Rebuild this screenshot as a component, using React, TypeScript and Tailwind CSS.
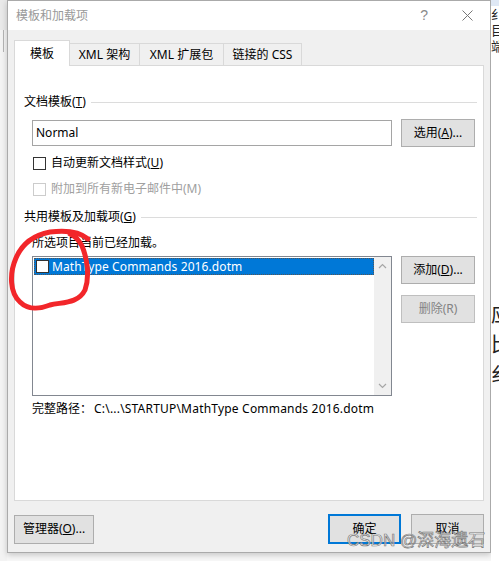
import React from 'react';

const font = "font-['Noto_Sans','Noto_Sans_CJK_SC',sans-serif]";

const Btn: React.FC<{ children: React.ReactNode; disabled?: boolean; primary?: boolean; className?: string }> = ({
  children,
  disabled,
  primary,
  className = '',
}) => (
  <div
    className={`flex items-center justify-center bg-[#e1e1e1] text-[12px] ${
      primary ? 'border-2 border-[#0078d7]' : disabled ? 'border border-[#bfbfbf]' : 'border border-[#adadad]'
    } ${disabled ? 'text-[#838383]' : 'text-[#000]'} ${className}`}
  >
    {children}
  </div>
);

const Chevron: React.FC<{ up?: boolean }> = ({ up }) => (
  <svg width="9" height="6" viewBox="0 0 9 6" className="block">
    <path d={up ? 'M1 5 L4.5 1.5 L8 5' : 'M1 1 L4.5 4.5 L8 1'} fill="none" stroke="#a6a6a6" strokeWidth="1.2" />
  </svg>
);

const SectionLabel: React.FC<{ children: React.ReactNode }> = ({ children }) => (
  <div className="flex items-center h-[18px] pl-[9px] pr-[6px]">
    <span className="text-[12px] text-[#000] whitespace-nowrap">{children}</span>
    <div className="flex-1 h-px bg-[#dcdcdc] ml-[5px]" />
  </div>
);

export default function App() {
  return (
    <div className={`relative w-[499px] h-[561px] overflow-hidden bg-[#f7f7f7] flex ${font}`}>
      {/* left backdrop */}
      <div className="w-[7px] h-full bg-[#f3f3f3] flex flex-col">
        <div className="h-[30px] bg-[#e9e9e9]" />
        <div className="w-px h-[22px] bg-[#b5b5b5] ml-[3px]" />
      </div>

      {/* dialog */}
      <div className="w-[484px] h-[553px] border border-[#aaaaaa] bg-[#f0f0f0] flex flex-col shadow-[0_2px_6px_rgba(0,0,0,0.2)]">
        <div className="h-[30px] bg-white flex items-center pl-[8px] pr-[17px]">
          <span className="text-[12px] text-[#999999]">模板和加载项</span>
          <div className="flex-1" />
          <span className="text-[14px] text-[#8a8a8a] mr-[34px] font-['Liberation_Sans',sans-serif]">?</span>
          <svg width="11" height="11" viewBox="0 0 11 11">
            <path d="M0.5 0.5 L10.5 10.5 M10.5 0.5 L0.5 10.5" stroke="#777" strokeWidth="1" />
          </svg>
        </div>

        <div className="flex-1 flex flex-col px-[6px] pt-[10px] pb-[8px]">
          {/* tabs */}
          <div className="flex items-end h-[26px] relative z-10">
            <div className="w-[56px] h-[26px] bg-white border border-[#d9d9d9] border-b-0 flex items-center justify-center text-[12px] text-[#000]">
              模板
            </div>
            <div className="w-[70px] h-[23px] border border-[#d9d9d9] border-l-0 border-b-0 flex items-center justify-center text-[12px] text-[#000]">
              XML 架构
            </div>
            <div className="w-[84px] h-[23px] border border-[#d9d9d9] border-l-0 border-b-0 flex items-center justify-center text-[12px] text-[#000]">
              XML 扩展包
            </div>
            <div className="w-[78px] h-[23px] border border-[#d9d9d9] border-l-0 border-b-0 flex items-center justify-center text-[12px] text-[#000]">
              链接的 CSS
            </div>
          </div>

          {/* panel */}
          <div className="h-[436px] -mt-px bg-white border border-[#d9d9d9] flex flex-col">
            <div className="mt-[27px]">
              <SectionLabel>
                文档模板(<u>T</u>)
              </SectionLabel>
            </div>

            <div className="mt-[8px] flex items-center h-[28px] pl-[17px]">
              <div className="w-[360px] h-[26px] border border-[#a5a5a5] flex items-center pl-[3px] text-[12px] text-[#000]">
                Normal
              </div>
              <Btn className="ml-[9px] w-[74px] h-[28px]">
                选用(<u>A</u>)...
              </Btn>
            </div>

            <div className="mt-[7px] flex items-center h-[18px] pl-[18px]">
              <div className="w-[13px] h-[13px] border border-[#333333] bg-white" />
              <span className="ml-[5px] text-[12px] text-[#000]">
                自动更新文档样式(<u>U</u>)
              </span>
            </div>

            <div className="mt-[8px] flex items-center h-[18px] pl-[18px]">
              <div className="w-[13px] h-[13px] border border-[#cccccc] bg-white" />
              <span className="ml-[5px] text-[12px] text-[#a0a0a0]">附加到所有新电子邮件中(M)</span>
            </div>

            <div className="mt-[10px]">
              <SectionLabel>
                共用模板及加载项(<u>G</u>)
              </SectionLabel>
            </div>

            <div className="mt-[8px] h-[18px] pl-[17px] flex items-center text-[12px] text-[#000]">
              所选项目当前已经加载。
            </div>

            <div className="mt-[4px] flex items-start pl-[17px]">
              <div className="w-[360px] h-[140px] border border-[#828790] flex">
                <div className="flex-1 pt-px pl-px">
                  <div className="h-[17px] bg-[#0078d7] flex items-center outline outline-1 outline-dotted outline-[#555] -outline-offset-1">
                    <div className="ml-[2px] w-[13px] h-[13px] border border-[#333333] bg-white" />
                    <span className="ml-[3px] text-[12px] tracking-[0.1px] text-white whitespace-nowrap">
                      MathType Commands 2016.dotm
                    </span>
                  </div>
                </div>
                <div className="w-[17px] bg-[#f0f0f0] flex flex-col items-center justify-between py-[6px]">
                  <Chevron up />
                  <Chevron />
                </div>
              </div>
              <div className="ml-[9px] flex flex-col gap-[11px]">
                <Btn className="w-[74px] h-[28px]">
                  添加(<u>D</u>)...
                </Btn>
                <Btn disabled className="w-[74px] h-[28px]">
                  删除(R)
                </Btn>
              </div>
            </div>

            <div className="mt-[4px] h-[18px] pl-[17px] flex items-center text-[12px] text-[#000] whitespace-nowrap">
              <span>完整路径：</span>
              <span className="ml-[2px] tracking-[0.2px]">C:\...\STARTUP\MathType Commands 2016.dotm</span>
            </div>
          </div>

          {/* bottom buttons */}
          <div className="mt-[13px] flex items-center">
            <Btn className="w-[80px] h-[29px]">
              管理器(<u>O</u>)...
            </Btn>
            <div className="flex-1" />
            <Btn primary className="w-[73px] h-[30px]">
              确定
            </Btn>
            <Btn className="ml-[10px] w-[73px] h-[30px]">取消</Btn>
          </div>
        </div>
      </div>

      {/* right backdrop */}
      <div className="flex-1 h-full flex overflow-hidden">
        <div className="w-[3px] h-full bg-[#e4e4e4]" />
        <div className="flex-1 h-full bg-white flex flex-col text-[#222]">
          <div className="h-[6px] bg-[#dfe8f5]" />
          <div className="text-[13px] leading-[16px] whitespace-nowrap">纟</div>
          <div className="text-[13px] leading-[16px] whitespace-nowrap">目</div>
          <div className="text-[13px] leading-[16px] whitespace-nowrap">端</div>
          <div className="mt-[246px] text-[20px] leading-[30px] whitespace-nowrap">应</div>
          <div className="text-[20px] leading-[30px] whitespace-nowrap">比</div>
          <div className="text-[20px] leading-[30px] whitespace-nowrap">纟</div>
        </div>
      </div>

      {/* red hand-drawn annotation */}
      <svg className="absolute left-0 top-0 pointer-events-none" width="120" height="330" viewBox="0 0 120 330">
        <path
          d="M88 239 C80 232, 66 230, 50 232 C34 235, 22 244, 16 258 C9 274, 10 293, 20 302 C28 310, 40 309, 50 305 C62 302, 78 304, 85 290 C90 276, 87 258, 82 246 C79 240, 75 236, 70 234"
          fill="none"
          stroke="#f2262a"
          strokeWidth="5"
          strokeLinecap="round"
          strokeLinejoin="round"
        />
      </svg>

      {/* watermark */}
      <div className="absolute left-[347px] top-[530px] text-[17px] leading-[22px] text-white/70 [-webkit-text-stroke:0.7px_#7a7a7a] whitespace-nowrap font-['Liberation_Sans','Noto_Sans_CJK_SC',sans-serif]">
        CSDN @深海遗石
      </div>
    </div>
  );
}
